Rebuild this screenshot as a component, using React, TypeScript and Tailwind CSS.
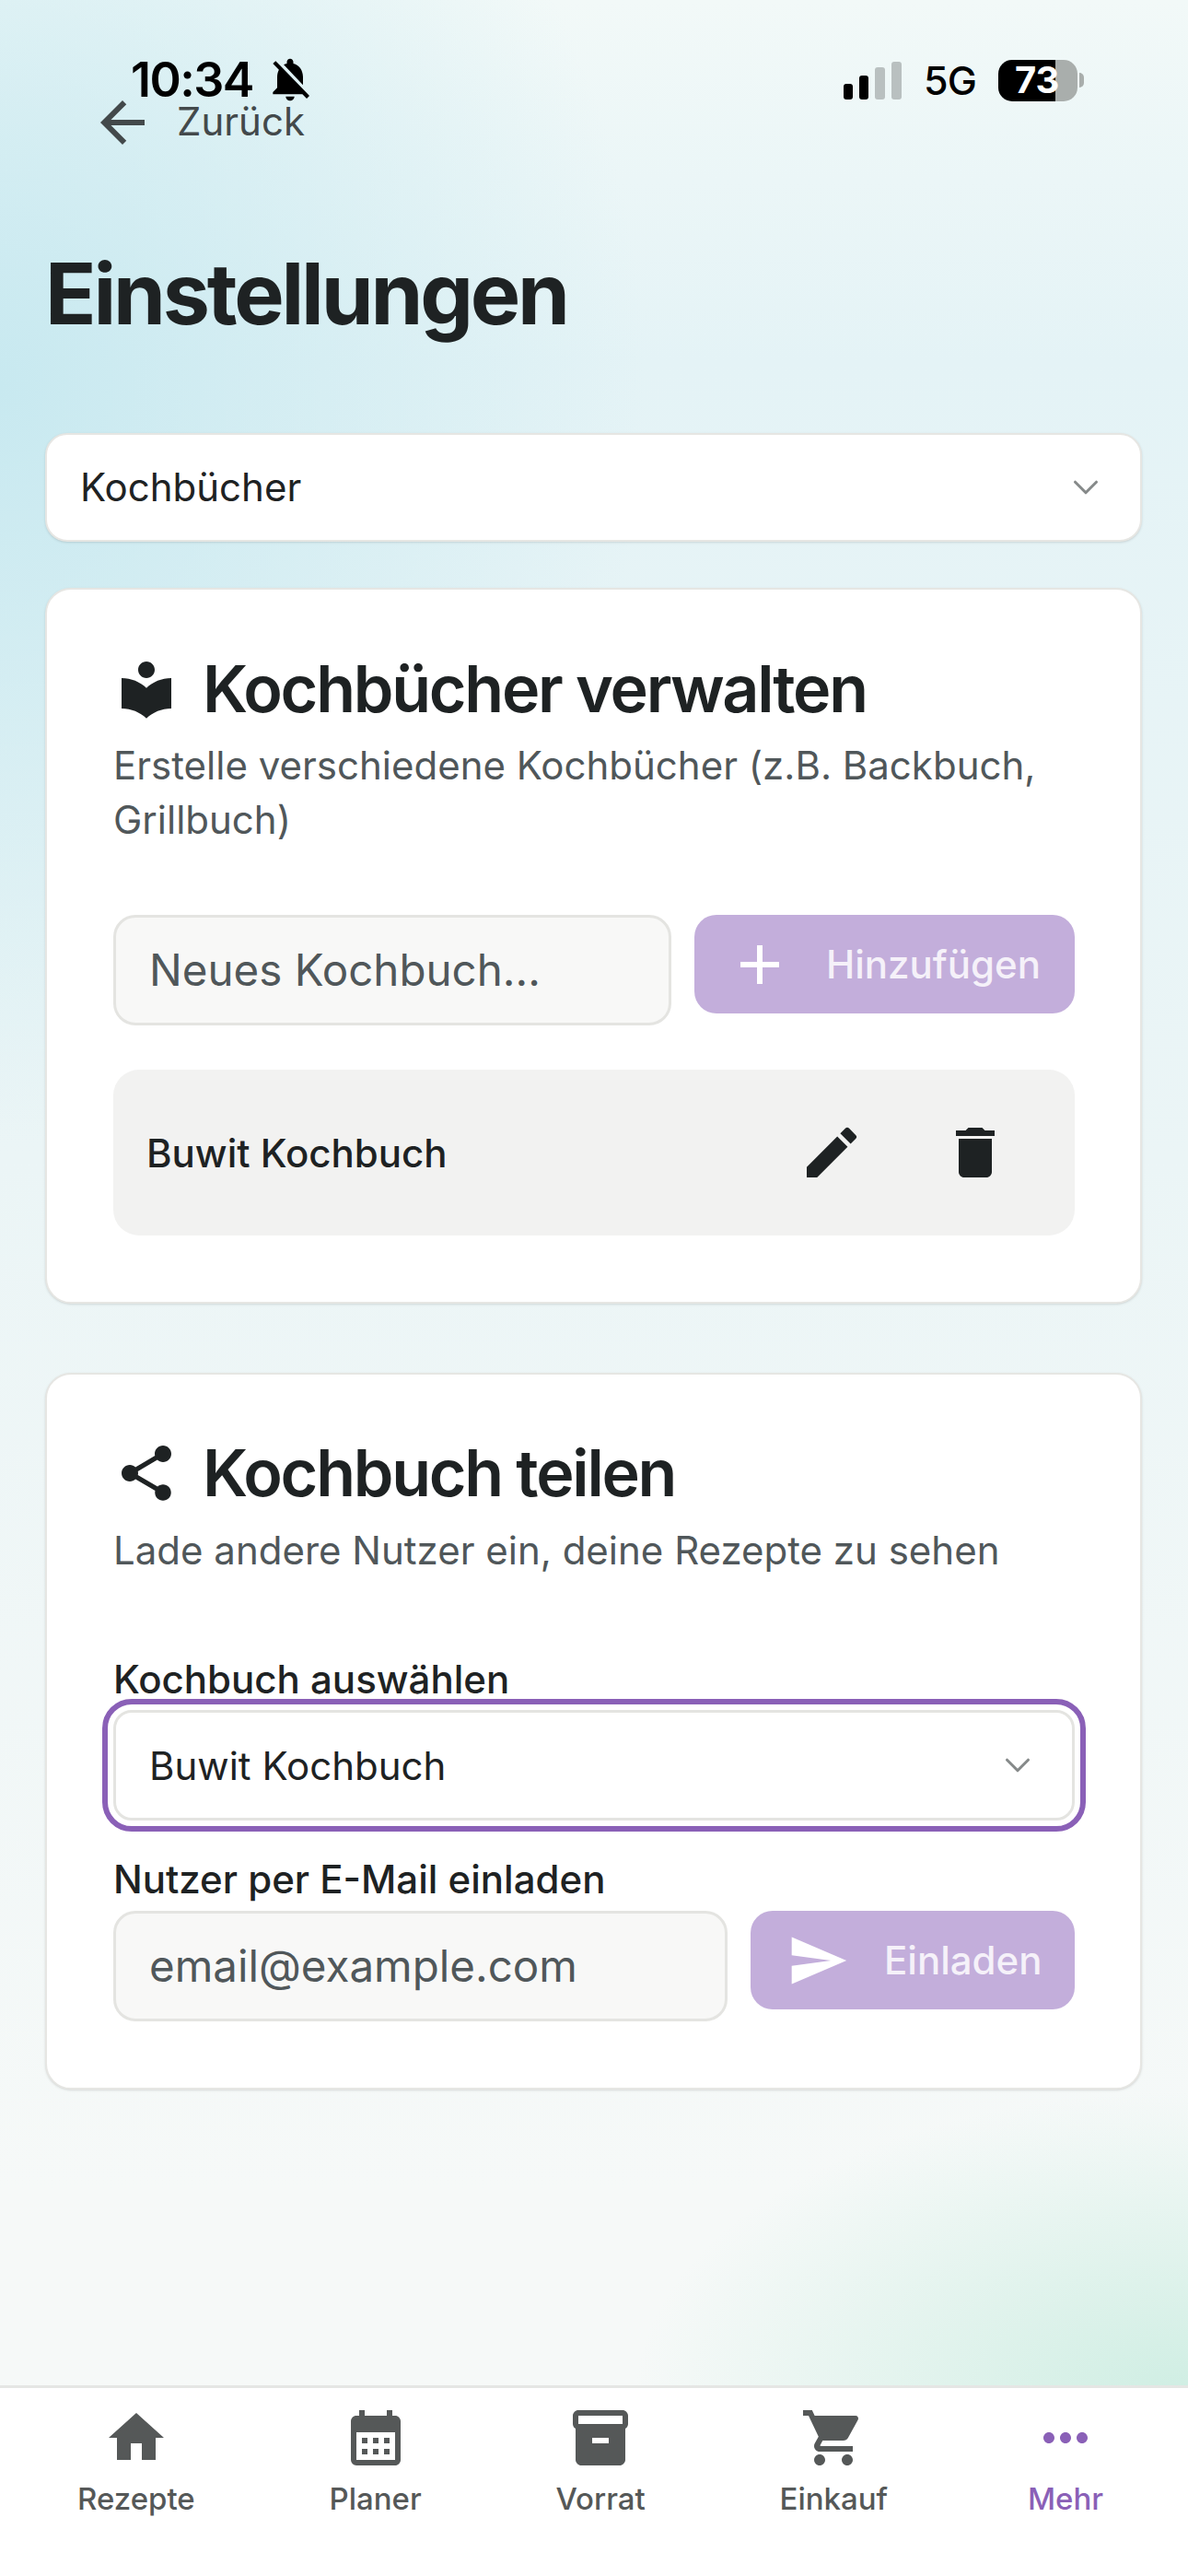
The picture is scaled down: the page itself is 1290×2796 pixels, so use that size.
import { ChevronDown } from "lucide-react";
import {
  MdAdd,
  MdArrowBack,
  MdCalendarMonth,
  MdDelete,
  MdEdit,
  MdHome,
  MdInventory2,
  MdLocalLibrary,
  MdMoreHoriz,
  MdNotificationsOff,
  MdSend,
  MdShare,
  MdShoppingCart,
} from "react-icons/md";

const tabs = [
  { name: "Rezepte", icon: MdHome },
  { name: "Planer", icon: MdCalendarMonth },
  { name: "Vorrat", icon: MdInventory2 },
  { name: "Einkauf", icon: MdShoppingCart },
  { name: "Mehr", icon: MdMoreHoriz, active: true },
];

function StatusBar() {
  return (
    <div className="flex h-[46px] items-center justify-between pl-[142px] pr-[113px] text-black">
      <div className="flex items-center gap-[12px]">
        <span className="text-[52px] leading-[44px] font-semibold tracking-[-0.03em]">10:34</span>
        <MdNotificationsOff size={56} className="-mt-[2px]" />
      </div>
      <div className="flex items-center">
        <div className="flex items-end gap-[7px]">
          <span className="h-[17px] w-[10px] rounded-[3px] bg-black" />
          <span className="h-[26px] w-[10px] rounded-[3px] bg-black" />
          <span className="h-[35px] w-[11px] rounded-[3px] bg-[#b9c0c0]" />
          <span className="h-[41px] w-[11px] rounded-[3px] bg-[#b9c0c0]" />
        </div>
        <span className="ml-[24px] text-[43px] leading-none font-medium tracking-[-0.02em]">5G</span>
        <div className="relative ml-[24px] flex items-center">
          <div className="flex h-[45px] w-[86px] overflow-hidden rounded-[15px]">
            <div className="w-[62px] bg-black" />
            <div className="flex-1 bg-[#a9aeac]" />
          </div>
          <span className="ml-[2px] h-[16px] w-[5px] rounded-r-full bg-[#a9aeac]" />
          <span className="absolute left-[18px] text-[40px] leading-none font-bold text-white">73</span>
        </div>
      </div>
    </div>
  );
}

function SectionTitle({ icon: Icon, title }: { icon: typeof MdShare; title: string }) {
  return (
    <div className="flex h-[80px] items-center gap-[25px] text-[#1e2223]">
      <Icon size={72} className="shrink-0" />
      <h2 className="text-[70px] leading-[80px] font-semibold tracking-[-0.032em]">{title}</h2>
    </div>
  );
}

export default function App() {
  return (
    <div
      className="flex h-[2796px] w-[1290px] flex-col overflow-hidden bg-[radial-gradient(ellipse_700px_820px_at_0%_15%,#c8e9f0,transparent),radial-gradient(ellipse_600px_330px_at_100%_93%,#cfeee3,transparent),linear-gradient(180deg,#f2f9f8_0%,#e4f3f6_14%,#ebf5f6_45%,#f6f9f8_85%)] pt-[64px] text-[#1e2223]"
      style={{ fontFamily: "Inter, 'Noto Sans', sans-serif" }}
    >
      <StatusBar />

      <div className="flex h-[46px] items-center gap-[23px] pl-[97px] text-[#43494b]">
        <MdArrowBack size={72} className="shrink-0" />
        <span className="-mt-[2px] text-[42px] leading-none">Zurück</span>
      </div>

      <main className="flex flex-col pr-[50px] pl-[49px]">
        <h1 className="mt-[108px] text-[91.5px] leading-[110px] font-bold tracking-[-0.035em]">Einstellungen</h1>

        <div className="mt-[96px] flex h-[118px] items-center justify-between rounded-[24px] border-2 border-[#e6e6e3] bg-white pr-[36px] pl-[36px] text-[42px] shadow-sm">
          <span className="-mt-[2px]">Kochbücher</span>
          <ChevronDown size={46} strokeWidth={1.6} className="text-[#868a8a]" />
        </div>

        {/* Kochbücher verwalten */}
        <section className="mt-[50px] flex h-[777px] flex-col rounded-[28px] border-2 border-[#e6e6e3] bg-white pt-[68px] pr-[71px] pl-[72px] shadow-sm">
          <SectionTitle icon={MdLocalLibrary} title="Kochbücher verwalten" />
          <p className="mt-[13px] text-[42px] leading-[59px] text-[#50575a]">
            Erstelle verschiedene Kochbücher (z.B. Backbuch, Grillbuch)
          </p>

          <div className="mt-[74px] flex items-start gap-[25px]">
            <div className="flex h-[120px] flex-1 items-center rounded-[24px] border-[3px] border-[#e4e4e1] bg-[#f8f8f7] pl-[36px] text-[47.5px] text-[#50575a]">
              Neues Kochbuch...
            </div>
            <button className="flex h-[107px] w-[413px] items-center rounded-[24px] bg-[#c3aedb] pl-[35px] text-[42px] font-medium text-[#f5f1f9]">
              <MdAdd size={72} className="shrink-0 text-white" />
              <span className="ml-[36px]">Hinzufügen</span>
            </button>
          </div>

          <div className="mt-[48px] flex h-[180px] items-center justify-between rounded-[28px] bg-[#f2f2f1] pr-[72px] pl-[36px]">
            <span className="text-[42px] font-medium">Buwit Kochbuch</span>
            <div className="flex items-center gap-[84px]">
              <MdEdit size={72} />
              <MdDelete size={72} />
            </div>
          </div>
        </section>

        {/* Kochbuch teilen */}
        <section className="mt-[75px] flex h-[778px] flex-col rounded-[28px] border-2 border-[#e6e6e3] bg-white pt-[67px] pr-[71px] pl-[72px] shadow-sm">
          <SectionTitle icon={MdShare} title="Kochbuch teilen" />
          <p className="mt-[14px] text-[42px] leading-[59px] text-[#50575a]">Lade andere Nutzer ein, deine Rezepte zu sehen</p>

          <label className="mt-[87px] text-[42px] leading-[48px] font-medium">Kochbuch auswählen</label>
          <div className="mt-[9px] flex h-[120px] items-center justify-between rounded-[20px] border-[3px] border-[#e4e4e1] bg-white pr-[36px] pl-[36px] text-[42px] outline-[6px] outline-offset-[6px] outline-[#8a60b7] outline-solid">
            <span>Buwit Kochbuch</span>
            <ChevronDown size={46} strokeWidth={1.6} className="text-[#868a8a]" />
          </div>

          <label className="mt-[40px] text-[42px] leading-[48px] font-medium">Nutzer per E-Mail einladen</label>
          <div className="mt-[10px] flex items-start gap-[25px]">
            <div className="flex h-[120px] flex-1 items-center rounded-[24px] border-[3px] border-[#e4e4e1] bg-[#f8f8f7] pl-[36px] text-[47.5px] text-[#50575a]">
              email@example.com
            </div>
            <button className="flex h-[107px] w-[352px] items-center rounded-[24px] bg-[#c3aedb] pl-[39px] text-[42px] font-medium text-[#f5f1f9]">
              <MdSend size={68} className="shrink-0 text-white" />
              <span className="ml-[38px]">Einladen</span>
            </button>
          </div>
        </section>
      </main>

      <nav className="mt-auto flex h-[207px] justify-between border-t-[3px] border-[#e5e6e4] bg-white pt-[18px] pr-[92px] pl-[84px]">
        {tabs.map((tab) => {
          const Icon = tab.icon;
          return (
            <div
              key={tab.name}
              className={`flex flex-col items-center ${tab.active ? "ml-[6px] text-[#8a60b7]" : "text-[#555858]"}`}
            >
              <Icon size={72} />
              <span className="mt-[10px] text-[33px] leading-[40px] font-medium">{tab.name}</span>
            </div>
          );
        })}
      </nav>
    </div>
  );
}
